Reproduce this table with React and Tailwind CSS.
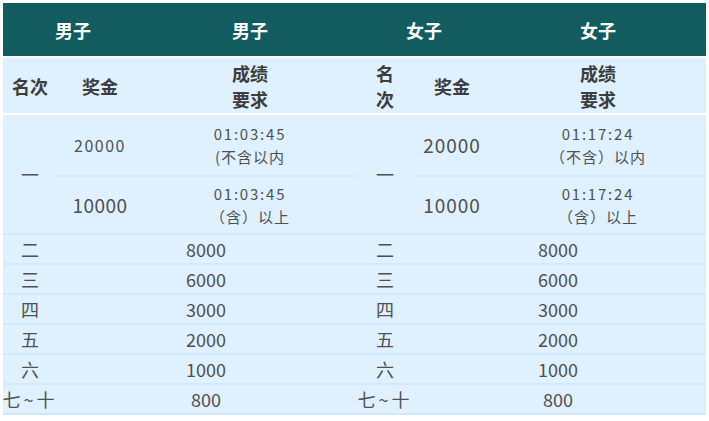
// Prize money table for the men's and women's races, two halves side by side.

const COLS = 'grid grid-cols-[54px_86px_214px_56px_78px_214px]'
const LINE = 'border-b-2 border-[#d3e8fa]'
const CELL = 'flex items-center justify-center text-center'

const ROWS = [
  { place: '二', prize: '8000' },
  { place: '三', prize: '6000' },
  { place: '四', prize: '3000' },
  { place: '五', prize: '2000' },
  { place: '六', prize: '1000' },
  { place: '七~十', prize: '800', wide: true },
]

function TimeCell({ time, note, className }) {
  return (
    <div className={`${CELL} flex-col ${LINE} ${className}`}>
      <span className="text-[15px] leading-[23px] tracking-[1.8px]">{time}</span>
      <span className="text-[15px] leading-[23px] tracking-[1px]">{note}</span>
    </div>
  )
}

export default function App() {
  return (
    <div
      className="flex flex-col gap-y-[2px] bg-white p-[3px] w-[709px] h-[421px] text-[#505050]"
      style={{ fontFamily: '"Noto Sans CJK SC", "Noto Sans", sans-serif' }}
    >
      {/* Top header: group titles */}
      <div className={`${COLS} h-[53px] bg-[#125c5f] text-white font-bold text-[18px]`}>
        <div className={`${CELL} col-span-2 pt-[2px]`}>男子</div>
        <div className={`${CELL} pt-[2px]`}>男子</div>
        <div className={`${CELL} col-span-2 pt-[2px]`}>女子</div>
        <div className={`${CELL} pt-[2px]`}>女子</div>
      </div>

      {/* Column header */}
      <div className={`${COLS} h-[55px] bg-[#dff0fe] text-[#3d3d3d] font-bold text-[18px] leading-[26px]`}>
        <div className={CELL}>名次</div>
        <div className={CELL}>奖金</div>
        <div className={CELL}>成绩<br />要求</div>
        <div className={CELL}>名<br />次</div>
        <div className={CELL}>奖金</div>
        <div className={CELL}>成绩<br />要求</div>
      </div>

      {/* Body */}
      <div className={`${COLS} grid-rows-[62px_58px_repeat(6,30px)] bg-[#dff0fe]`}>
        <div className={`${CELL} ${LINE} col-start-1 row-start-1 row-span-2 text-[18px]`}>一</div>
        <div className={`${CELL} ${LINE} col-start-2 row-start-1 text-[16px] tracking-[1.5px]`}>20000</div>
        <TimeCell className="col-start-3 row-start-1" time="01:03:45" note="(不含以内" />
        <div className={`${CELL} ${LINE} col-start-2 row-start-2 text-[19px] tracking-[0.5px]`}>10000</div>
        <TimeCell className="col-start-3 row-start-2" time="01:03:45" note="（含）以上" />

        <div className={`${CELL} ${LINE} col-start-4 row-start-1 row-span-2 text-[18px]`}>一</div>
        <div className={`${CELL} ${LINE} col-start-5 row-start-1 text-[19px] tracking-[1px]`}>20000</div>
        <TimeCell className="col-start-6 row-start-1" time="01:17:24" note="（不含）以内" />
        <div className={`${CELL} ${LINE} col-start-5 row-start-2 text-[19px] tracking-[1px]`}>10000</div>
        <TimeCell className="col-start-6 row-start-2" time="01:17:24" note="（含）以上" />

        {ROWS.map((r) => (
          <div key={r.place} className="contents">
            <div className={`${CELL} ${LINE} text-[18px] whitespace-nowrap ${r.wide ? 'tracking-[3px]' : ''}`}>{r.place}</div>
            <div className={`${CELL} ${LINE} col-span-2 text-[18px] pr-[2px]`}>{r.prize}</div>
            <div className={`${CELL} ${LINE} text-[18px] whitespace-nowrap ${r.wide ? 'tracking-[3px]' : ''}`}>{r.place}</div>
            <div className={`${CELL} ${LINE} col-span-2 text-[18px] pr-[2px]`}>{r.prize}</div>
          </div>
        ))}
      </div>
    </div>
  )
}
